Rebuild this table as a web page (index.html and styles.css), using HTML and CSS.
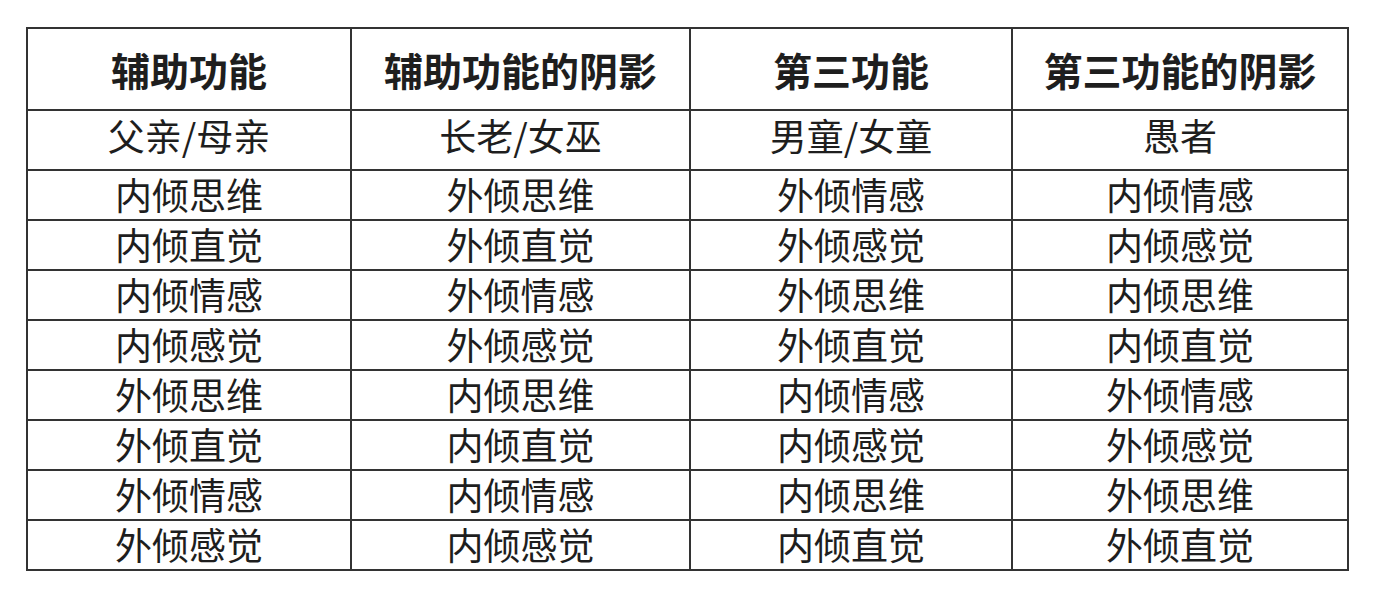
FILE: index.html
```html
<!DOCTYPE html>
<html lang="zh-CN">
<head>
<meta charset="utf-8">
<title>功能表</title>
<link rel="stylesheet" href="styles.css">
</head>
<body>
<table class="grid">
  <colgroup>
    <col class="c1"><col class="c2"><col class="c3"><col class="c4">
  </colgroup>
  <thead>
    <tr class="head">
      <th>辅助功能</th><th>辅助功能的阴影</th><th>第三功能</th><th>第三功能的阴影</th>
    </tr>
  </thead>
  <tbody>
    <tr class="role">
      <td>父亲/母亲</td><td>长老/女巫</td><td>男童/女童</td><td>愚者</td>
    </tr>
    <tr><td>内倾思维</td><td>外倾思维</td><td>外倾情感</td><td>内倾情感</td></tr>
    <tr><td>内倾直觉</td><td>外倾直觉</td><td>外倾感觉</td><td>内倾感觉</td></tr>
    <tr><td>内倾情感</td><td>外倾情感</td><td>外倾思维</td><td>内倾思维</td></tr>
    <tr><td>内倾感觉</td><td>外倾感觉</td><td>外倾直觉</td><td>内倾直觉</td></tr>
    <tr><td>外倾思维</td><td>内倾思维</td><td>内倾情感</td><td>外倾情感</td></tr>
    <tr><td>外倾直觉</td><td>内倾直觉</td><td>内倾感觉</td><td>外倾感觉</td></tr>
    <tr><td>外倾情感</td><td>内倾情感</td><td>内倾思维</td><td>外倾思维</td></tr>
    <tr><td>外倾感觉</td><td>内倾感觉</td><td>内倾直觉</td><td>外倾直觉</td></tr>
  </tbody>
</table>
</body>
</html>
```
FILE: styles.css
```css
html, body {
  margin: 0;
  padding: 0;
  background: #ffffff;
}

body {
  padding: 27px 0 0 26px;
  font-family: "Noto Sans CJK SC", "Noto Sans", sans-serif;
  color: #1e1e1e;
}

.grid {
  border-collapse: collapse;
  table-layout: fixed;
  width: 1321px;
}

.c1 { width: 324px; }
.c2 { width: 339px; }
.c3 { width: 322px; }
.c4 { width: 336px; }

.grid th,
.grid td {
  border: 2px solid #333333;
  text-align: center;
  vertical-align: middle;
  padding: 0;
  line-height: 1;
}

.grid th {
  height: 80px;
  font-size: 39px;
  font-weight: 700;
}

.grid td {
  height: 47px;
  padding-bottom: 1px;
  font-size: 37px;
  font-weight: 400;
}

.grid .role td {
  height: 48px;
  padding-bottom: 10px;
}
```
